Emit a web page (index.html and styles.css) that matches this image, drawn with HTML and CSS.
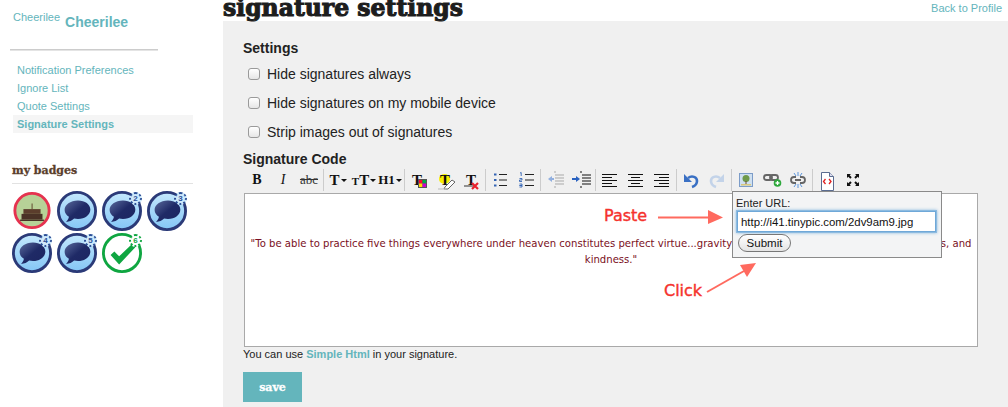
FILE: index.html
```html
<!DOCTYPE html>
<html lang="en">
<head>
  <meta charset="UTF-8" />
  <title>Signature Settings</title>
  <link rel="stylesheet" href="styles.css">
</head>
<body>
  <svg class="defs" width="0" height="0">
    <defs>
      <linearGradient id="blueFill" x1="0" y1="0" x2="0" y2="1">
        <stop offset="0" stop-color="#c4e8fd"/>
        <stop offset="1" stop-color="#84c6f5"/>
      </linearGradient>
      <linearGradient id="bubbleFill" x1="0" y1="0" x2="1" y2="1">
        <stop offset="0" stop-color="#5a6a9c"/>
        <stop offset="0.5" stop-color="#1f2a66"/>
        <stop offset="1" stop-color="#1c2560"/>
      </linearGradient>
      <symbol id="bubble" viewBox="0 0 42 42">
        <circle cx="21" cy="21" r="19.5" fill="url(#blueFill)" stroke="#2b3a78" stroke-width="3"/>
        <path d="M22 10c-8 0-14 4.500-14 10 0 3 1.800 5.500 4.500 7-.3 2-1.500 4-3 5.500 3.500 0 6.500-1.500 8.500-3.500 1.300.3 2.600.5 4 .5 7.500 0 13-4.500 13-10s-5.500-9.500-13-9.500z" fill="url(#bubbleFill)"/>
      </symbol>
    </defs>
  </svg>

  <div class="page">
    <aside class="sidebar">
      <div class="user">
        <span class="user-small">Cheerilee</span>
        <a class="user-name" href="#">Cheerilee</a>
      </div>
      <hr class="user-rule">
      <nav class="side-nav">
        <a href="#">Notification Preferences</a>
        <a href="#">Ignore List</a>
        <a href="#">Quote Settings</a>
        <a href="#" class="active">Signature Settings</a>
      </nav>
      <h3 class="badges-title">my badges</h3>
      <div class="badges">
        <svg class="badge" viewBox="0 0 42 42">
          <circle cx="21" cy="20.500" r="18" fill="#b7d197" stroke="#e5324f" stroke-width="3"/>
          <path d="M10 24h22v6H10z" fill="#4a3226"/>
          <path d="M12 19h18v5H12z" fill="#5b3d2c"/>
          <path d="M8.500 30h25v1.500h-25z" fill="#4a3226"/>
          <path d="M20.500 13h1.200v6h-1.200z" fill="#6b5a3c"/>
        </svg>
        <svg class="badge"><use href="#bubble"/></svg>
        <div class="badge-wrap"><svg class="badge"><use href="#bubble"/></svg><span class="gear">2</span></div>
        <div class="badge-wrap"><svg class="badge"><use href="#bubble"/></svg><span class="gear">3</span></div>
        <div class="badge-wrap"><svg class="badge"><use href="#bubble"/></svg><span class="gear">4</span></div>
        <div class="badge-wrap"><svg class="badge"><use href="#bubble"/></svg><span class="gear">5</span></div>
        <div class="badge-wrap">
          <svg class="badge" viewBox="0 0 42 42">
            <circle cx="21" cy="21" r="19.500" fill="#fff" stroke="#0fa641" stroke-width="3"/>
            <path d="M9 23l4-3.500 5 5L31 12l4 3-17 18z" fill="#0fa641"/>
          </svg>
          <span class="gear gear-green">6</span>
        </div>
      </div>
    </aside>

    <main class="content">
      <header class="content-head">
        <h1>signature settings</h1>
        <a class="back" href="#">Back to Profile</a>
      </header>

      <div class="panel">
        <h4>Settings</h4>
        <label class="check"><input type="checkbox"> Hide signatures always</label>
        <label class="check"><input type="checkbox"> Hide signatures on my mobile device</label>
        <label class="check"><input type="checkbox"> Strip images out of signatures</label>
        <h4 class="code-title">Signature Code</h4>

        <div class="editor-wrap">
          <div class="toolbar">
            <span class="tb bold-b">B</span>
            <span class="tb ital-i">I</span>
            <span class="tb strike">abc</span>
            <i class="sep"></i>
            <span class="tb serif-t">T<b class="caret"></b></span>
            <span class="tb serif-t"><small>T</small>T<b class="caret"></b></span>
            <span class="tb serif-h">H1<b class="caret"></b></span>
            <i class="sep"></i>
            <span class="tb serif-t left-t">T<svg class="over" viewBox="0 0 26 22"><path d="M12 10h9v9h-9z" fill="#555"/><path d="M13 11h3.500v3.500H13z" fill="#f03"/><path d="M16.500 11H20v3.500h-3.500z" fill="#0a4"/><path d="M13 14.500h3.500V18H13z" fill="#fd0"/><path d="M16.500 14.500H20V18h-3.500z" fill="#c0c"/></svg></span>
            <span class="tb serif-t hl">T<svg class="over" viewBox="0 0 26 22"><path d="M13 18l7-7 3 2-7 7h-4z" fill="#fff" stroke="#666"/><path d="M6 20h8" stroke="#bbb"/></svg></span>
            <span class="tb serif-t">T<svg class="over" viewBox="0 0 26 22"><path d="M6 17h12" stroke="#333"/><path d="M14 14l6 6M20 14l-6 6" stroke="#e8212e" stroke-width="2.200"/></svg></span>
            <i class="sep"></i>
            <span class="tb"><svg viewBox="0 0 26 22"><path d="M12 5.500h8M12 11h8M12 16.500h8" stroke="#222"/><path d="M7 4.500h2.500v2H7zM7 10h2.500v2H7zM7 15.500h2.500v2H7z" fill="#3464b4"/></svg></span>
            <span class="tb"><svg viewBox="0 0 26 22"><path d="M12 5.500h9M12 11h9M12 16.500h9" stroke="#222"/><path d="M7 4l1.200-.5V7M6.500 9.500h2.500v1.500H6.500v1.500H9M6.500 15H9v1.500H6.500 9V18H6.500" fill="none" stroke="#3464b4" stroke-width="0.900"/></svg></span>
            <i class="sep"></i>
            <span class="tb faded"><svg viewBox="0 0 26 22"><path d="M12 3h2M13 6h9M13 9h9M13 12h9M13 15h9M12 18h2" stroke="#999"/><path d="M10 7v6l-4-3z" fill="#7aa0dc"/><path d="M8 9h4v2H8z" fill="#7aa0dc"/></svg></span>
            <span class="tb"><svg viewBox="0 0 26 22"><path d="M12 3h2M14 6h9M14 9h9M14 12h9M14 15h9M12 18h2" stroke="#111"/><path d="M8 7v6l4-3z" fill="#2a62c0"/><path d="M4 9h5v2H4z" fill="#2a62c0"/></svg></span>
            <i class="sep"></i>
            <span class="tb"><svg viewBox="0 0 26 22"><path d="M5 5.500h15M5 8.500h10M5 11.500h15M5 14.500h10M5 17.500h15" stroke="#111" stroke-width="1.200"/></svg></span>
            <span class="tb"><svg viewBox="0 0 26 22"><path d="M5 5.500h15M8 8.500h9M5 11.500h15M8 14.500h9M5 17.500h15" stroke="#111" stroke-width="1.200"/></svg></span>
            <span class="tb"><svg viewBox="0 0 26 22"><path d="M5 5.500h15M10 8.500h10M5 11.500h15M10 14.500h10M5 17.500h15" stroke="#111" stroke-width="1.200"/></svg></span>
            <i class="sep"></i>
            <span class="tb"><svg viewBox="0 0 26 22"><path d="M10 9c4-3 9-1 9 3 0 3-2 5-5 6" fill="none" stroke="#3a70c4" stroke-width="2.600"/><path d="M6 5v8h8z" fill="#3a70c4"/></svg></span>
            <span class="tb faded"><svg viewBox="0 0 26 22"><path d="M16 9c-4-3-9-1-9 3 0 3 2 5 5 6" fill="none" stroke="#b8cde8" stroke-width="2.600"/><path d="M20 5v8h-8z" fill="#b8cde8"/></svg></span>
            <i class="sep"></i>
            <span class="tb"><svg viewBox="0 0 26 22"><rect x="6.500" y="4.500" width="13" height="13" fill="#cfe0f0" stroke="#7c9cc8"/><path d="M8 15h10v1.500H8z" fill="#d8c87c"/><circle cx="13" cy="9.500" r="3.500" fill="#6f9a4a"/><path d="M12.500 12h1v3h-1z" fill="#6a4a2a"/></svg></span>
            <span class="tb"><svg viewBox="0 0 26 22"><rect x="5" y="6" width="8" height="5" rx="2.500" fill="none" stroke="#666" stroke-width="1.800"/><rect x="11" y="6" width="8" height="5" rx="2.500" fill="none" stroke="#666" stroke-width="1.800"/><circle cx="18.500" cy="14" r="3.800" fill="#2ea83c"/><path d="M16.500 14h4M18.500 12v4" stroke="#fff" stroke-width="1.300"/></svg></span>
            <span class="tb"><svg viewBox="0 0 26 22"><path d="M11 8H9a3 3 0 0 0 0 6h2M15 8h2a3 3 0 0 1 0 6h-2M10 11h6" fill="none" stroke="#666" stroke-width="1.800"/><path d="M13 3v4M13 15v4M9 4l2 3M17 4l-2 3M9 18l2-3M17 18l-2-3" stroke="#5a94dc"/></svg></span>
            <i class="sep"></i>
            <span class="tb"><svg viewBox="0 0 26 22"><path d="M7.500 3.500h8l4 4v14h-12z" fill="#fff" stroke="#5a6c90"/><path d="M15.500 3.500v4h4" fill="#dde" stroke="#5a6c90"/><path d="M11.500 10l-2 2.500 2 2.500M15 10l2 2.500-2 2.500" fill="none" stroke="#e02020" stroke-width="1.300"/></svg></span>
            <span class="tb"><svg viewBox="0 0 26 22"><path d="M7 5h4l-1.300 1.300 2 2-1.400 1.400-2-2L7 9zM19 5v4l-1.300-1.300-2 2-1.400-1.400 2-2L15 5zM7 17v-4l1.300 1.300 2-2 1.400 1.400-2 2L11 17zM19 17h-4l1.300-1.300-2-2 1.400-1.400 2 2L19 13z" fill="#111"/></svg></span>
          </div>

          <div class="editor">
            <p>"To be able to practice five things everywhere under heaven constitutes perfect virtue...gravity, generosity of soul, sincerity, earnestness, and kindness."</p>
          </div>

          <div class="url-popup">
            <label for="imgUrl">Enter URL:</label>
            <input id="imgUrl" type="text" value="http://i41.tinypic.com/2dv9am9.jpg">
            <button type="button">Submit</button>
          </div>

          <span class="note note-paste">Paste</span>
          <span class="note note-click">Click</span>
          <svg class="arrows" viewBox="0 0 120 100">
            <path d="M15 17.500h52" stroke="#ff6a5f" stroke-width="2"/>
            <path d="M65 10l15 7.500-15 6.500z" fill="#ff6a5f"/>
            <path d="M64 92l37-21" stroke="#ff6a5f" stroke-width="2"/>
            <path d="M97 65l16-2-9 14z" fill="#ff6a5f"/>
          </svg>
        </div>

        <p class="hint">You can use <a href="#">Simple Html</a> in your signature.</p>
        <button class="save" type="button">save</button>
      </div>
    </main>
  </div>
</body>
</html>
```

FILE: styles.css
```css
html, body { margin:0; height:407px; overflow:hidden; }
body { background:white; color:#222; font-family:'Liberation Sans',Arial,sans-serif; font-size:11px; }
a { color:#64b5bc; text-decoration:none; }
.defs { position:absolute; }
.page { display:flex; }

.sidebar { width:223px; flex:none; box-sizing:border-box; padding:11px 30px 0 10px; }
.user { display:flex; align-items:flex-start; gap:5px; padding-left:3px; height:38px; color:#64b5bc; }
.user-small { font-size:11px; }
.user-name { font-size:14px; font-weight:bold; margin-top:3px; }
.user-rule { border:none; border-top:1px solid #ccc; border-bottom:1px solid #e4e4e4; margin:0 35px 0 0; }
.side-nav { display:flex; flex-direction:column; margin:10px 0 0 3px; }
.side-nav a { display:block; height:18px; line-height:18px; padding-left:4px; }
.side-nav a.active { background:#f5f5f5; font-weight:bold; }
.badges-title { font-family:'DejaVu Serif',serif; font-size:11px; font-weight:bold; color:#5a3e2b; -webkit-text-stroke:0.3px #5a3e2b; margin:31px 0 0 2px; height:19px; line-height:14px; border-bottom:1px solid #e2e2e2; }
.badges { display:flex; flex-wrap:wrap; width:185px; margin-left:2px; padding-top:7px; gap:2px 5px; }
.badge { width:40px; height:40px; display:block; }
.badge-wrap { position:relative; width:40px; height:40px; }
.gear { position:absolute; top:1px; right:0; width:9px; height:9px; line-height:9px; border-radius:50%; background:#cfeafc; border:2px dotted #2b4f96; color:#2b4f96; font-size:8px; font-weight:bold; text-align:center; }
.gear-green { background:#fff; border-color:#0fa641; color:#0fa641; }

.content { flex:1; min-width:0; }
.content-head { display:flex; justify-content:space-between; height:21px; }
.content-head h1 { margin:-7px 0 0; font-family:'DejaVu Serif',serif; font-size:23.5px; line-height:30px; font-weight:bold; color:#1d1d1d; -webkit-text-stroke:1.1px #1d1d1d; white-space:nowrap; }
.back { margin:2px 6px 0 0; line-height:13px; }

.panel { background:#f0f0f0; height:386px; box-sizing:border-box; padding:19px 30px 0 20px; }
.panel h4 { margin:0; font-size:14px; line-height:16px; font-weight:bold; color:#222; }
.check { display:flex; align-items:center; gap:7px; font-size:14px; height:29px; padding-left:5px; color:#222; }
.check:first-of-type { margin-top:3px; }
.check input { appearance:none; box-sizing:border-box; width:12px; height:12px; margin:0; border:1px solid #9a9a9a; border-radius:3px; background:linear-gradient(#fff,#e6e6e6); }
.panel .code-title { margin-top:5px; }

.editor-wrap { position:relative; margin-top:2px; }
.toolbar { display:flex; align-items:flex-start; height:24px; padding-left:1px; }
.tb { position:relative; flex:none; width:26px; height:22px; display:flex; align-items:center; justify-content:center; color:#111; }
.tb svg { width:26px; height:22px; display:block; }
.tb .over { position:absolute; left:0; top:0; }
.faded { opacity:0.8; }
.sep { flex:none; width:1px; height:22px; margin:0 1px; background:#ccc; }
.bold-b { font-family:'Liberation Serif',serif; font-weight:bold; font-size:14px; }
.ital-i { font-family:'Liberation Serif',serif; font-style:italic; font-size:14px; }
.strike { font-family:'Liberation Serif',serif; font-size:13px; text-decoration:line-through; color:#333; }
.serif-t { font-family:'Liberation Serif',serif; font-weight:bold; font-size:15px; }
.serif-t small { font-size:11px; align-self:flex-end; margin-bottom:4px; }
.serif-h { font-family:'Liberation Serif',serif; font-weight:bold; font-size:13px; }
.left-t { justify-content:flex-start; padding-left:6px; box-sizing:border-box; }
.caret { display:inline-block; margin-left:1px; border:3px solid transparent; border-top-color:#111; border-bottom:none; vertical-align:middle; }
.hl { z-index:0; }
.hl::before { content:""; position:absolute; left:7px; top:5px; width:11px; height:10px; border-radius:50%; background:#f7ee00; z-index:-1; }

.editor { height:152px; margin-left:1px; background:white; border:1px solid #a9a9a9; width:732px; }
.editor p { margin:42px 2px 0; text-align:center; font-family:'DejaVu Sans',Verdana,sans-serif; font-size:10.1px; line-height:16px; color:#7a0f22; }

.url-popup { position:absolute; left:489px; top:22px; width:205px; height:65px; background:#f3f4f5; border:1px solid #8a8a8a; padding-left:3px; }
.url-popup label { display:block; margin-top:5px; line-height:13px; font-size:11px; }
.url-popup input { display:block; box-sizing:border-box; width:199px; height:21px; margin:1px 0 0 1px; border:1px solid #6fa8d8; box-shadow:0 0 0 1px #8dbbe0,0 0 3px 1px #8dbbe0; outline:none; padding:0 3px; font:11.4px 'Liberation Sans',sans-serif; color:#111; background:white; }
.url-popup button { display:block; margin:2px 0 0 2px; width:53px; height:18px; border-radius:9px; border:1px solid #777; background:linear-gradient(#fff,#e4e4e4); padding:0; font:11.5px 'Liberation Sans',sans-serif; color:#111; }

.note { position:absolute; color:#f5322d; font-family:'DejaVu Sans',sans-serif; font-size:16px; -webkit-text-stroke:0.4px #f5322d; line-height:16px; }
.note-paste { left:361px; top:39px; }
.note-click { left:421px; top:114px; }
.arrows { position:absolute; left:400px; top:31px; width:120px; height:100px; }

.hint { margin:1px 0 0; font-size:11px; line-height:13px; color:#222; }
.hint a { font-weight:bold; }
.save { display:block; margin-top:11px; width:59px; height:30px; border:none; background:#64b5bc; color:white; font-family:'DejaVu Serif',serif; font-weight:bold; font-size:11px; -webkit-text-stroke:0.3px white; padding:0; }
```
